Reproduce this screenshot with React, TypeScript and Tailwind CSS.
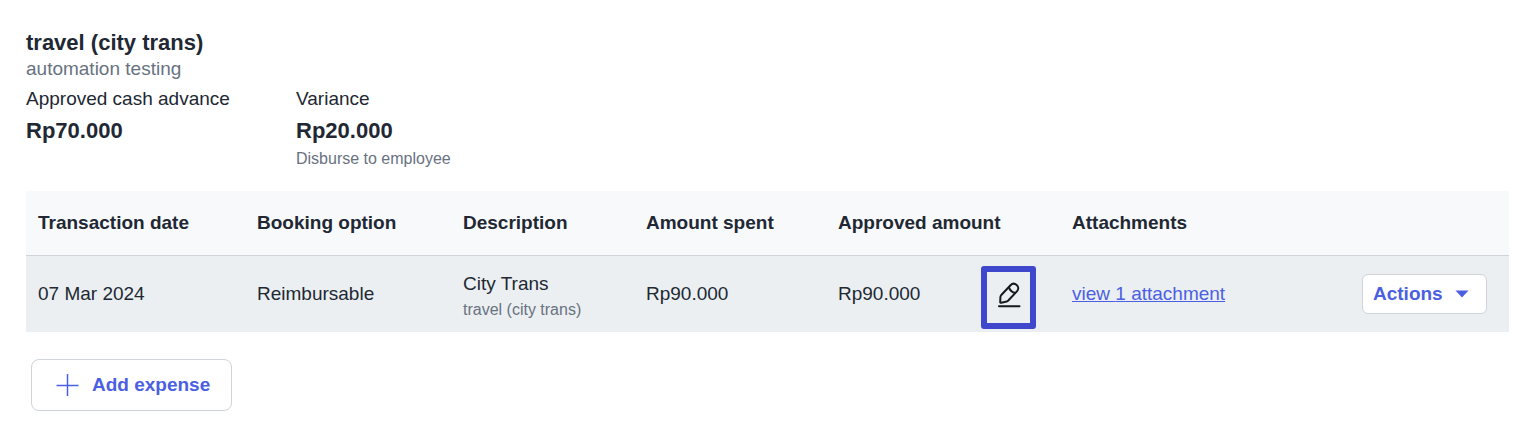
import { useState } from 'react';

type Expense = {
  id: string;
  date: string;
  booking: string;
  title: string;
  subtitle: string;
  spent: string;
  approved: string;
  attachments: number;
};

const initialExpenses: Expense[] = [
  {
    id: '1',
    date: '07 Mar 2024',
    booking: 'Reimbursable',
    title: 'City Trans',
    subtitle: 'travel (city trans)',
    spent: 'Rp90.000',
    approved: 'Rp90.000',
    attachments: 1,
  },
];

function EditIcon() {
  return (
    <svg
      viewBox="0 0 24 26"
      className="h-[26px] w-6"
      fill="none"
      stroke="#17191c"
      strokeWidth="2"
      strokeLinecap="round"
      strokeLinejoin="round"
      aria-hidden="true"
    >
      <path d="M3.2 20.2 L3.4 15.2 Q3.5 14 4.3 13 L13.5 3.2 C15.2 1.4 17.8 1.3 19.7 2.9 C21.6 4.6 21.7 7.2 20.1 9.1 L11.3 18.5 Q10.2 19.6 8.8 19.8 L4.2 20.7 Q3.2 20.8 3.2 20.2 Z" />
      <path d="M11.9 5.1 C12.7 8.4 14.6 10.2 18 11" />
      <path d="M2 24.3 H22.5" />
    </svg>
  );
}

export default function App() {
  const [expenses] = useState<Expense[]>(initialExpenses);

  return (
    <main className="bg-white pt-[29px] pr-6 pb-4 pl-[26px] font-['Liberation_Sans',Arial,sans-serif] text-[19px] leading-7 text-[#212833]">
      {/* Summary */}
      <h1 className="text-[22px] leading-7 font-bold">travel (city trans)</h1>
      <p className="leading-6 text-[#68727f]">automation testing</p>

      <dl className="flex pt-1">
        <div className="w-[270px]">
          <dt>Approved cash advance</dt>
          <dd className="text-[22px] leading-9 font-bold">Rp70.000</dd>
        </div>
        <div>
          <dt>Variance</dt>
          <dd className="text-[22px] leading-9 font-bold">Rp20.000</dd>
          <dd className="text-base leading-5 text-[#68727f]">Disburse to employee</dd>
        </div>
      </dl>

      {/* Expenses */}
      <table className="mt-[22px] w-full table-fixed border-separate border-spacing-0 text-left">
        <thead>
          <tr className="h-[65px] bg-[#f8f9fb]">
            <th className="w-[219px] border-b border-[#ced4da] px-3 font-bold">Transaction date</th>
            <th className="w-[206px] border-b border-[#ced4da] px-3 font-bold">Booking option</th>
            <th className="w-[183px] border-b border-[#ced4da] px-3 font-bold">Description</th>
            <th className="w-[192px] border-b border-[#ced4da] px-3 font-bold">Amount spent</th>
            <th className="w-[234px] border-b border-[#ced4da] px-3 font-bold">Approved amount</th>
            <th className="w-[234px] border-b border-[#ced4da] px-3 font-bold">Attachments</th>
            <th className="border-b border-[#ced4da]" aria-label="Actions" />
          </tr>
        </thead>
        <tbody>
          {expenses.map((expense) => (
            <tr key={expense.id} className="h-[76px] bg-[#ebeff2]">
              <td className="px-3">{expense.date}</td>
              <td className="px-3">{expense.booking}</td>
              <td className="px-3 pt-1">
                <div>{expense.title}</div>
                <div className="text-base leading-6 text-[#68727f]">{expense.subtitle}</div>
              </td>
              <td className="px-3">{expense.spent}</td>
              <td className="px-3">
                <div className="flex items-center justify-between pr-[27px]">
                  {expense.approved}
                  <button type="button" aria-label="Edit approved amount" className="relative pt-0.5">
                    <EditIcon />
                    <span className="absolute -top-3.5 -right-[15px] -bottom-[21px] -left-4 rounded-[3px] border-[6px] border-[#3f48cc]" />
                  </button>
                </div>
              </td>
              <td className="px-3">
                <a href="#attachments" className="text-[#4b5fe2] underline">
                  view {expense.attachments} attachment
                </a>
              </td>
              <td className="pr-[22px] text-right">
                <button
                  type="button"
                  className="inline-flex h-10 w-[125px] items-center gap-3 rounded-md border border-[#ced4da] bg-white px-[10px] font-bold text-[#4b5fe2]"
                >
                  Actions
                  <svg viewBox="0 0 14 8" className="h-2 w-[14px]" fill="currentColor" aria-hidden="true">
                    <path d="M0.5 0.5 H13.5 L7 7.5 Z" />
                  </svg>
                </button>
              </td>
            </tr>
          ))}
        </tbody>
      </table>

      <button
        type="button"
        className="mt-[27px] ml-[5px] flex h-[52px] items-center gap-3 rounded-lg border border-[#ced4da] bg-white pr-[21px] pl-6 font-bold text-[#4b5fe2]"
      >
        <svg viewBox="0 0 24 24" className="size-6" fill="none" stroke="currentColor" strokeWidth="1.5" aria-hidden="true">
          <path d="M11.5 1 V23 M0.5 12.5 H22.5" />
        </svg>
        Add expense
      </button>
    </main>
  );
}
